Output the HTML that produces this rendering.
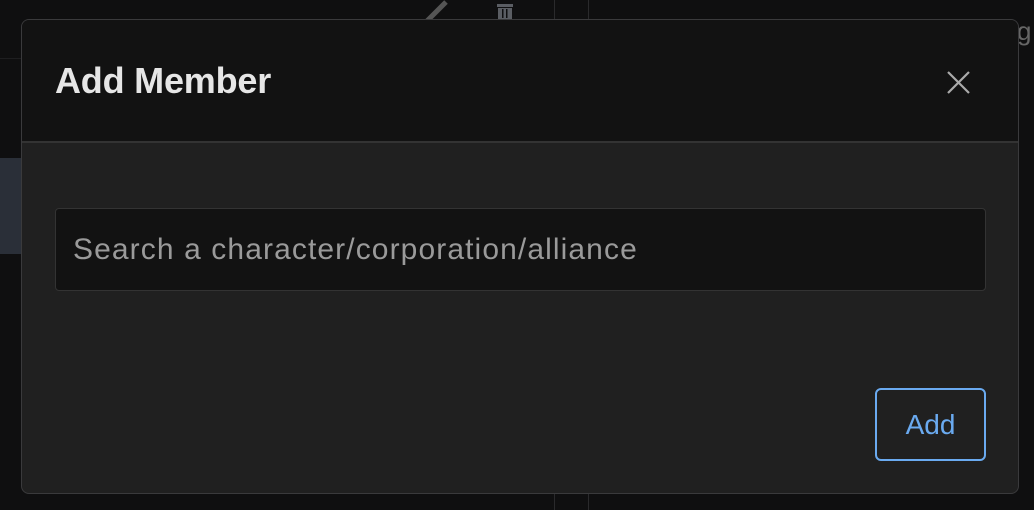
<!DOCTYPE html>
<html><head><style>
html,body{margin:0;padding:0;width:1034px;height:510px;overflow:hidden;background:#0f0f10;font-family:"Liberation Sans",sans-serif;position:relative}
.abs{position:absolute}
</style></head><body>
<div class="abs" style="left:0;top:58px;width:21px;height:1px;background:#1e1e20"></div>
<div class="abs" style="left:0;top:158px;width:21px;height:96px;background:#2a2f38"></div>
<div class="abs" style="left:554px;top:0;width:1px;height:510px;background:#2a2a2c"></div>
<div class="abs" style="left:588px;top:0;width:1px;height:510px;background:#2a2a2c"></div>
<svg class="abs" style="left:420px;top:0" width="32" height="20"><path d="M6 22 L26 2" stroke="#555" stroke-width="5"/></svg>
<svg class="abs" style="left:492px;top:0" width="28" height="20"><rect x="5" y="4" width="16" height="3" fill="#5a5d63"/><rect x="6" y="8" width="14" height="12" fill="#5a5d63"/><rect x="10" y="9" width="1.5" height="9" fill="#0f0f10"/><rect x="14" y="9" width="1.5" height="9" fill="#0f0f10"/></svg>
<div class="abs" style="left:1017px;top:16px;color:#666;font-size:26px">g</div>
<div class="abs" style="left:21px;top:19px;width:996px;height:473px;border:1px solid #3a3a3c;border-radius:8px;background:#202020;overflow:hidden">
  <div style="height:121px;background:#121212;border-bottom:2px solid #333"></div>
  <div class="abs" style="left:33px;top:40px;color:#e6e6e6;font-size:36px;font-weight:bold;letter-spacing:-0.2px">Add Member</div>
  <svg class="abs" style="left:924px;top:50px" width="26" height="26"><path d="M2 2 L23 23 M23 2 L2 23" stroke="#aaa" stroke-width="2.2"/></svg>
  <div class="abs" style="left:33px;top:188px;width:931px;height:83px;background:#121212;border:1px solid #333;border-radius:4px;box-sizing:border-box"></div>
  <div class="abs" style="left:51px;top:213px;color:#9a9a9a;font-size:30px;letter-spacing:1.1px">Search a character/corporation/alliance</div>
  <div class="abs" style="left:853px;top:368px;width:111px;height:73px;border:2px solid #6aaaf0;border-radius:6px;box-sizing:border-box;color:#6aaaf0;font-size:28px;text-align:center;line-height:69px">Add</div>
</div>
</body></html>
